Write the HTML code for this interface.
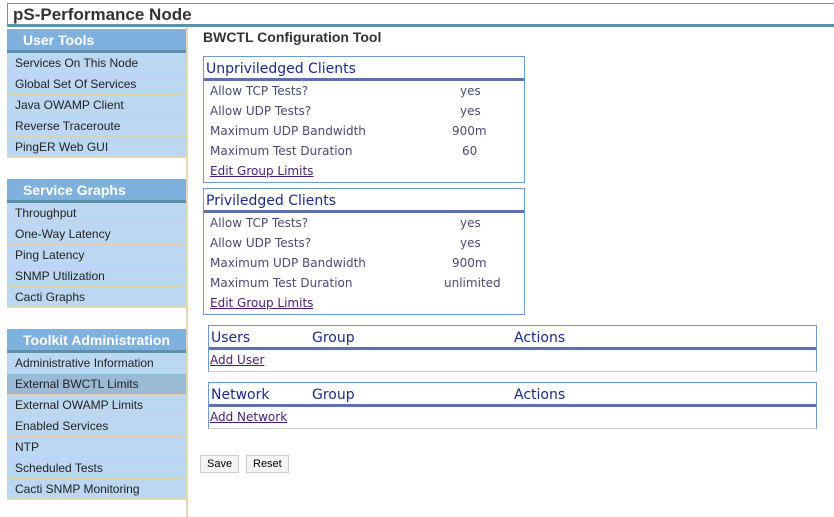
<!DOCTYPE html>
<html><head><meta charset="utf-8"><style>
*{margin:0;padding:0;box-sizing:border-box}
body{width:834px;height:517px;background:#fff;position:relative;overflow:hidden;font-family:"Liberation Sans",sans-serif}
.a{position:absolute}
.side{left:7px;width:181px;border-right:2px solid #e2d8b8}
.hd{height:24px;background:#80b0de;border-bottom:3px solid #5a93a8;color:#fff;font-weight:bold;font-size:14px;line-height:23px;padding-left:16px}
.it{height:21px;background:#bcd7f1;border-bottom:1px solid #d8d0b8;font-size:12px;color:#222;line-height:21px;padding-left:8px}
.it:last-child{border-bottom:2px solid #e2d8b8}
.box{border:1px solid #6a9bd0;background:#fff;font-family:"DejaVu Sans",sans-serif}
.bh{height:24px;border-bottom:3px solid #5a72b0;color:#1a2a8c;font-size:14px;line-height:24px;padding-left:2px}
.r{height:20px;font-size:12px;color:#4a4a7a;line-height:21px;padding-left:6px;position:relative}
.r span{position:absolute;left:256px}
.lk{color:#4a1a7a;text-decoration:underline;font-size:12px}
.btn{border:1px solid #ccc;background:#f4f4f4;font-size:11px;height:18px;line-height:17px;padding:0 6px;color:#000}
</style></head><body>
<div class="a" style="left:7px;top:3px;width:827px;height:1px;background:#888"></div>
<div class="a" style="left:7px;top:3px;width:1px;height:514px;background:#888"></div>
<div class="a" style="left:13px;top:5px;font-size:17px;font-weight:bold;color:#333">pS-Performance Node</div>
<div class="a" style="left:7px;top:24px;width:827px;height:3px;background:#5a93a8"></div>
<div class="a side" style="top:27px;height:490px;background:#fff"></div>
<div class="a side" style="top:29px">
<div class="hd">User Tools</div>
<div class="it">Services On This Node</div><div class="it">Global Set Of Services</div><div class="it">Java OWAMP Client</div><div class="it">Reverse Traceroute</div><div class="it">PingER Web GUI</div>
</div>
<div class="a side" style="top:179px">
<div class="hd">Service Graphs</div>
<div class="it">Throughput</div><div class="it">One-Way Latency</div><div class="it">Ping Latency</div><div class="it">SNMP Utilization</div><div class="it">Cacti Graphs</div>
</div>
<div class="a side" style="top:329px">
<div class="hd">Toolkit Administration</div>
<div class="it">Administrative Information</div><div class="it" style="background:#9bbad6">External BWCTL Limits</div><div class="it">External OWAMP Limits</div><div class="it">Enabled Services</div><div class="it">NTP</div><div class="it">Scheduled Tests</div><div class="it">Cacti SNMP Monitoring</div>
</div>
<div class="a" style="left:203px;top:29px;font-size:14px;font-weight:bold;color:#333">BWCTL Configuration Tool</div>
<div class="a box" style="left:203px;top:56px;width:322px;height:127px">
<div class="bh">Unpriviledged Clients</div>
<div class="r">Allow TCP Tests?<span>yes</span></div>
<div class="r">Allow UDP Tests?<span>yes</span></div>
<div class="r">Maximum UDP Bandwidth<span style="left:248px">900m</span></div>
<div class="r">Maximum Test Duration<span style="left:258px">60</span></div>
<div class="r"><a class="lk">Edit Group Limits</a></div>
</div>
<div class="a box" style="left:203px;top:188px;width:322px;height:127px">
<div class="bh">Priviledged Clients</div>
<div class="r">Allow TCP Tests?<span>yes</span></div>
<div class="r">Allow UDP Tests?<span>yes</span></div>
<div class="r">Maximum UDP Bandwidth<span style="left:248px">900m</span></div>
<div class="r">Maximum Test Duration<span style="left:240px">unlimited</span></div>
<div class="r"><a class="lk">Edit Group Limits</a></div>
</div>
<div class="a box" style="left:208px;top:325px;width:609px;height:47px;border-bottom-color:#ccc">
<div class="bh" style="position:relative">Users<span class="a" style="left:103px">Group</span><span class="a" style="left:305px">Actions</span></div>
<div class="r" style="padding-left:1px"><a class="lk">Add User</a></div>
</div>
<div class="a box" style="left:208px;top:382px;width:609px;height:47px;border-bottom-color:#ccc">
<div class="bh" style="position:relative">Network<span class="a" style="left:103px">Group</span><span class="a" style="left:305px">Actions</span></div>
<div class="r" style="padding-left:1px"><a class="lk">Add Network</a></div>
</div>
<div class="a btn" style="left:200px;top:455px">Save</div>
<div class="a btn" style="left:246px;top:455px">Reset</div>
</body></html>
